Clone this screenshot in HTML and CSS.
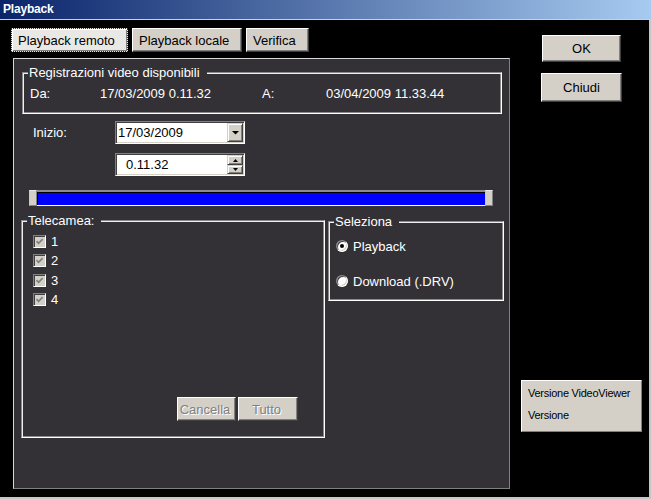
FILE: index.html
```html
<!DOCTYPE html>
<html lang="it">
<head>
<meta charset="utf-8">
<title>Playback</title>
<link rel="stylesheet" href="styles.css">
</head>
<body>
<div class="titlebar"><span class="title">Playback</span></div>
<div class="client">
  <div class="main">
    <div class="tabs">
      <button class="tab tab-active tab-w1">Playback remoto</button>
      <button class="tab tab-w2">Playback locale</button>
      <button class="tab tab-w3">Verifica</button>
    </div>
    <div class="panel">
      <div class="group group-rec">
        <span class="legend">Registrazioni video disponibili</span>
        <div class="rec-row">
          <span>Da:</span><span>17/03/2009 0.11.32</span><span>A:</span><span>03/04/2009 11.33.44</span>
        </div>
      </div>
      <div class="field-row">
        <span class="field-label">Inizio:</span>
        <div class="combo">
          <span class="combo-text">17/03/2009</span>
          <span class="combo-btn"><svg width="7" height="4" viewBox="0 0 7 4"><polygon points="0,0 7,0 3.5,3.6" fill="#000"/></svg></span>
        </div>
      </div>
      <div class="field-row field-row-spin">
        <div class="combo">
          <span class="combo-text spin-text">0.11.32</span>
          <span class="spin-btns">
            <span class="spin-btn spin-up"><svg width="5" height="3" viewBox="0 0 5 3"><polygon points="2.5,0 5,3 0,3" fill="#000"/></svg></span>
            <span class="spin-btn spin-down"><svg width="5" height="3" viewBox="0 0 5 3"><polygon points="0,0 5,0 2.5,3" fill="#000"/></svg></span>
          </span>
        </div>
      </div>
      <div class="slider">
        <span class="thumb"></span>
        <span class="bar"></span>
        <span class="thumb"></span>
      </div>
      <div class="lower">
        <div class="group group-cam">
          <span class="legend">Telecamea:</span>
          <div class="cam-row"><span class="check"><svg width="9" height="9" viewBox="0 0 9 9"><polyline points="1.5,4.2 3.6,6.3 7.6,2.2" fill="none" stroke="#808080" stroke-width="1.7"/></svg></span><span class="cam-label">1</span></div>
          <div class="cam-row"><span class="check"><svg width="9" height="9" viewBox="0 0 9 9"><polyline points="1.5,4.2 3.6,6.3 7.6,2.2" fill="none" stroke="#808080" stroke-width="1.7"/></svg></span><span class="cam-label">2</span></div>
          <div class="cam-row"><span class="check"><svg width="9" height="9" viewBox="0 0 9 9"><polyline points="1.5,4.2 3.6,6.3 7.6,2.2" fill="none" stroke="#808080" stroke-width="1.7"/></svg></span><span class="cam-label">3</span></div>
          <div class="cam-row"><span class="check"><svg width="9" height="9" viewBox="0 0 9 9"><polyline points="1.5,4.2 3.6,6.3 7.6,2.2" fill="none" stroke="#808080" stroke-width="1.7"/></svg></span><span class="cam-label">4</span></div>
          <div class="cam-actions">
            <button class="btn-dis btn-cancel">Cancella</button>
            <button class="btn-dis btn-all">Tutto</button>
          </div>
        </div>
        <div class="group group-sel">
          <span class="legend">Seleziona</span>
          <div class="radio-row"><span class="radio radio-on"></span><span>Playback</span></div>
          <div class="radio-row radio-row-2"><span class="radio"></span><span>Download (.DRV)</span></div>
        </div>
      </div>
    </div>
  </div>
  <div class="side">
    <button class="btn btn-ok">OK</button>
    <button class="btn btn-close">Chiudi</button>
    <div class="version">
      <div>Versione VideoViewer</div>
      <div>Versione</div>
    </div>
  </div>
</div>
</body>
</html>
```
FILE: styles.css
```css
* { box-sizing: border-box; }
html, body { margin: 0; padding: 0; }
body {
  width: 651px;
  height: 499px;
  overflow: hidden;
  background: #000;
  font-family: "Liberation Sans", Arial, sans-serif;
  font-size: 13px;
  line-height: 15px;
  color: #fff;
}
button {
  font-family: inherit;
  font-size: 13px;
  line-height: 15px;
  padding: 0;
  margin: 0;
  color: #000;
}
.titlebar {
  height: 20px;
  background: linear-gradient(to right, #0a246a, #a6caf0);
  border-bottom: 1px solid #d4d0c8;
  padding: 2px 0 0 3px;
}
.title {
  display: block;
  font-weight: bold;
  font-size: 12px;
  line-height: 15px;
  letter-spacing: -0.2px;
  color: #fff;
}
.client {
  height: 479px;
  display: flex;
  border-right: 2px solid #c6c6c6;
  border-bottom: 2px solid #c6c6c6;
}
.main {
  width: 510px;
  flex: none;
  padding: 8px 0 0 11px;
}
.tabs {
  display: flex;
  gap: 4px;
  height: 24px;
}
.tab {
  height: 24px;
  background: #d4d0c8;
  border: 1px solid;
  border-color: #fff #404040 #404040 #fff;
  box-shadow: inset -1px -1px 0 #808080;
  text-align: left;
  padding-left: 6px;
}
.tab-w1 { width: 117px; }
.tab-w2 { width: 110px; }
.tab-w3 { width: 63px; }
.tab-active {
  background: #eae8e4;
  border: 1px dotted #303030;
  box-shadow: inset 1px 1px 0 #fff, inset -1px -1px 0 #808080;
}
.panel {
  margin: 6px 0 0 2px;
  width: 497px;
  height: 431px;
  background: #333135;
  border: 1px solid;
  border-color: #d8d8d8 #808080 #808080 #d8d8d8;
  padding: 13px 0 0 7px;
}
.group {
  position: relative;
  border: 1px solid;
  border-color: #8a8a8a #fff #fff #8a8a8a;
  box-shadow: inset 1px 1px 0 #f0f0f0, inset -1px -1px 0 #8a8a8a;
}
.legend {
  position: absolute;
  top: -8px;
  left: 5px;
  padding: 0 7px 0 1px;
  background: #333135;
  line-height: 15px;
  white-space: nowrap;
}
.group-rec {
  margin-left: 1px;
  width: 480px;
  height: 42px;
  padding: 13px 0 0 7px;
}
.rec-row {
  display: grid;
  grid-template-columns: 70px 162px 64px auto;
}
.field-row {
  display: flex;
  align-items: center;
  height: 23px;
  margin-top: 7px;
}
.field-row-spin {
  margin-top: 9px;
  padding-left: 94px;
}
.field-label {
  width: 82px;
  margin-left: 12px;
}
.combo {
  display: flex;
  width: 130px;
  height: 23px;
  background: #fff;
  border: 1px solid;
  border-color: #808080 #fff #fff #808080;
  box-shadow: inset 1px 1px 0 #404040, inset -1px -1px 0 #d4d0c8;
  padding: 1px;
}
.combo-text {
  flex: 1;
  color: #000;
  padding-left: 1px;
  line-height: 19px;
}
.spin-text { padding-left: 9px; }
.combo-btn {
  width: 16px;
  height: 19px;
  display: flex;
  align-items: center;
  justify-content: center;
  background: #d4d0c8;
  border: 1px solid;
  border-color: #d4d0c8 #404040 #404040 #d4d0c8;
  box-shadow: inset 1px 1px 0 #fff, inset -1px -1px 0 #808080;
}
.spin-btns {
  width: 16px;
  height: 19px;
  display: flex;
  flex-direction: column;
}
.spin-btn {
  display: flex;
  align-items: center;
  justify-content: center;
  background: #d4d0c8;
  border: 1px solid;
  border-color: #d4d0c8 #404040 #404040 #d4d0c8;
  box-shadow: inset 1px 1px 0 #fff, inset -1px -1px 0 #808080;
}
.spin-up { height: 10px; }
.spin-down { height: 9px; }
.slider {
  display: flex;
  margin: 14px 0 0 8px;
  width: 464px;
  height: 16px;
}
.thumb {
  width: 8px;
  flex: none;
  background: #d4d0c8;
  border: 1px solid;
  border-color: #e8e8e8 #808080 #808080 #c8c8c8;
}
.bar {
  flex: 1;
  background: #0000ff;
  border-top: 2px solid #8c8c8c;
  border-bottom: 1px solid #fff;
  box-shadow: inset 1px 1px 0 #000;
}
.lower {
  display: flex;
  align-items: flex-start;
  margin-top: 14px;
}
.group-cam {
  width: 304px;
  height: 218px;
  padding: 14px 0 0 11px;
  display: flex;
  flex-direction: column;
}
.cam-row {
  display: flex;
  align-items: center;
  height: 19.33px;
  flex: none;
  align-items: flex-start;
}
.check {
  width: 13px;
  height: 13px;
  display: flex;
  align-items: center;
  justify-content: center;
  background: #d4d0c8;
  border: 1px solid;
  border-color: #808080 #fff #fff #808080;
  box-shadow: inset 1px 1px 0 #404040, inset -1px -1px 0 #d4d0c8;
}
.cam-label {
  margin-left: 5px;
  margin-top: -1px;
}
.cam-actions {
  margin-top: auto;
  margin-bottom: 16px;
  display: flex;
  justify-content: flex-end;
  gap: 2px;
  padding-right: 26px;
}
.btn-dis {
  height: 24px;
  background: #d4d0c8;
  border: 1px solid;
  border-color: #fff #404040 #404040 #fff;
  box-shadow: inset -1px -1px 0 #808080;
  color: #808080;
  text-shadow: 1px 1px 0 #fff;
  padding-right: 3px;
}
.btn-cancel { width: 59px; }
.btn-all { width: 60px; }
.group-sel {
  margin: 1px 0 0 3px;
  width: 176px;
  height: 80px;
  padding: 18px 0 0 7px;
}
.radio-row {
  display: flex;
  align-items: center;
  height: 12px;
}
.radio-row-2 { margin-top: 23px; }
.radio {
  width: 12px;
  height: 12px;
  flex: none;
  border-radius: 50%;
  background: #fff;
  border: 1px solid;
  border-color: #808080 #fff #fff #808080;
  box-shadow: inset 1px 1px 0 #404040, inset -1px -1px 0 #d4d0c8;
  margin-right: 5px;
  display: flex;
  align-items: center;
  justify-content: center;
}
.radio-on::after {
  content: "";
  width: 4px;
  height: 4px;
  border-radius: 50%;
  background: #000;
}
.side {
  flex: 1;
  display: flex;
  flex-direction: column;
  align-items: flex-start;
}
.btn {
  background: #d4d0c8;
  border: 1px solid;
  border-color: #fff #404040 #404040 #fff;
  box-shadow: inset -1px -1px 0 #808080;
  text-align: center;
}
.btn-ok {
  margin: 15px 0 0 32px;
  width: 79px;
  height: 27px;
}
.btn-close {
  margin: 11px 0 0 31px;
  width: 81px;
  height: 29px;
}
.version {
  margin: 278px 0 0 11px;
  width: 121px;
  height: 52px;
  background: #d4d0c8;
  border: 1px solid;
  border-color: #fff #808080 #808080 #fff;
  padding: 1px 0 0 6px;
  color: #000;
  font-size: 11px;
  line-height: 22px;
  letter-spacing: -0.25px;
  white-space: nowrap;
}
```
